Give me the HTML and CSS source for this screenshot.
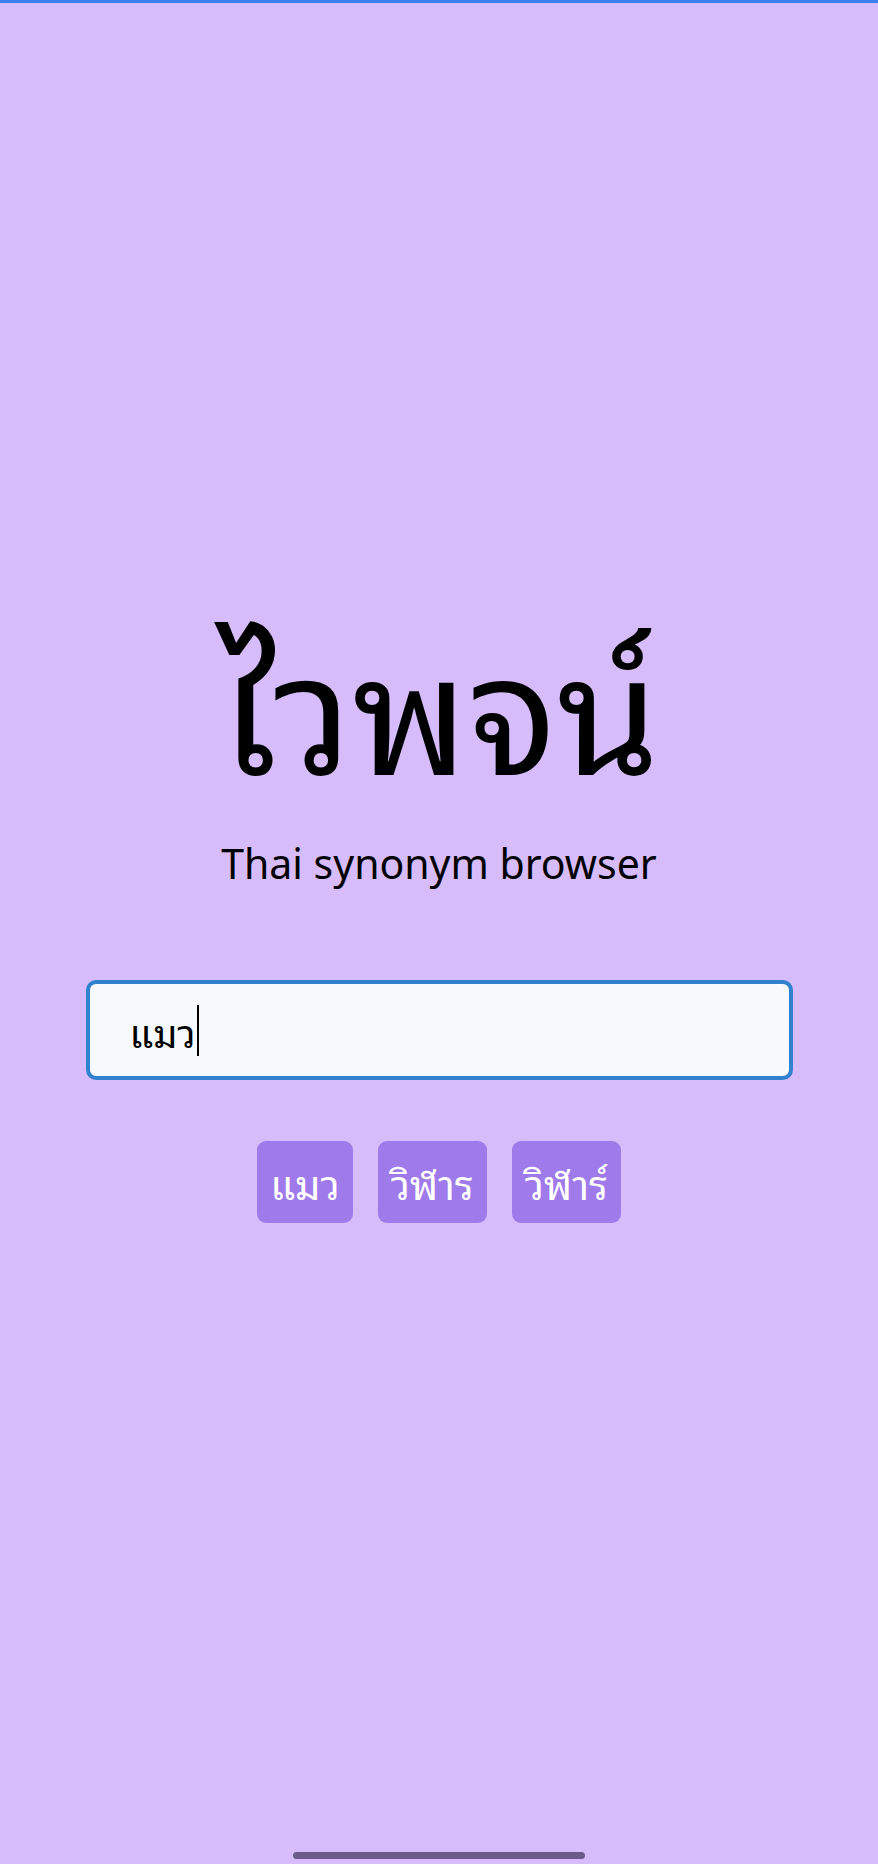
FILE: index.html
```html
<!DOCTYPE html>
<html lang="th">
<head>
<meta charset="utf-8">
<title>ไวพจน์</title>
<link rel="stylesheet" href="styles.css">
</head>
<body>
<div class="topbar"></div>
<main class="page">
  <h1 class="title">ไวพจน์</h1>
  <p class="subtitle">Thai synonym browser</p>
  <div class="search" role="textbox"><span class="search-text">แมว</span><span class="caret"></span></div>
  <div class="chips">
    <button class="chip">แมว</button>
    <button class="chip">วิฬาร</button>
    <button class="chip">วิฬาร์</button>
  </div>
</main>
<div class="home-indicator"></div>
</body>
</html>
```
FILE: styles.css
```css
html, body {
  margin: 0;
  padding: 0;
}
body {
  width: 878px;
  height: 1864px;
  background: #d6bcfa;
  font-family: "Noto Sans", "Noto Sans Thai Looped", "Loma", "Garuda", "Kinnari", "Sawasdee", "Noto Sans Thai", sans-serif;
  color: #000;
  position: relative;
  overflow: hidden;
}
.topbar {
  height: 3px;
  background: #3b7ff2;
}
.page {
  display: flex;
  flex-direction: column;
  align-items: center;
  padding: 626px 86px 0;
}
.title {
  margin: 0;
  font-size: 165px;
  font-weight: 400;
  line-height: 1;
}
.subtitle {
  margin: 45px 0 0;
  font-size: 41px;
  line-height: 1.2;
}
.search {
  margin-top: 92px;
  box-sizing: border-box;
  width: 707px;
  height: 100px;
  border: 4px solid #3182ce;
  border-radius: 10px;
  background: #f7fafc;
  display: flex;
  align-items: center;
  padding-left: 40px;
  font-size: 38px;
}
.caret {
  display: inline-block;
  width: 2px;
  height: 51px;
  background: #000;
  margin-left: 1px;
}
.chips {
  margin-top: 61px;
  display: flex;
  gap: 25px;
}
.chip {
  font-family: inherit;
  font-size: 40px;
  color: #fff;
  background: #9f7aea;
  border: none;
  border-radius: 9px;
  height: 82px;
  padding: 0 13px;
}
.home-indicator {
  position: absolute;
  left: 293px;
  bottom: 5px;
  width: 292px;
  height: 7px;
  border-radius: 4px;
  background: #6b5b8c;
}
```
